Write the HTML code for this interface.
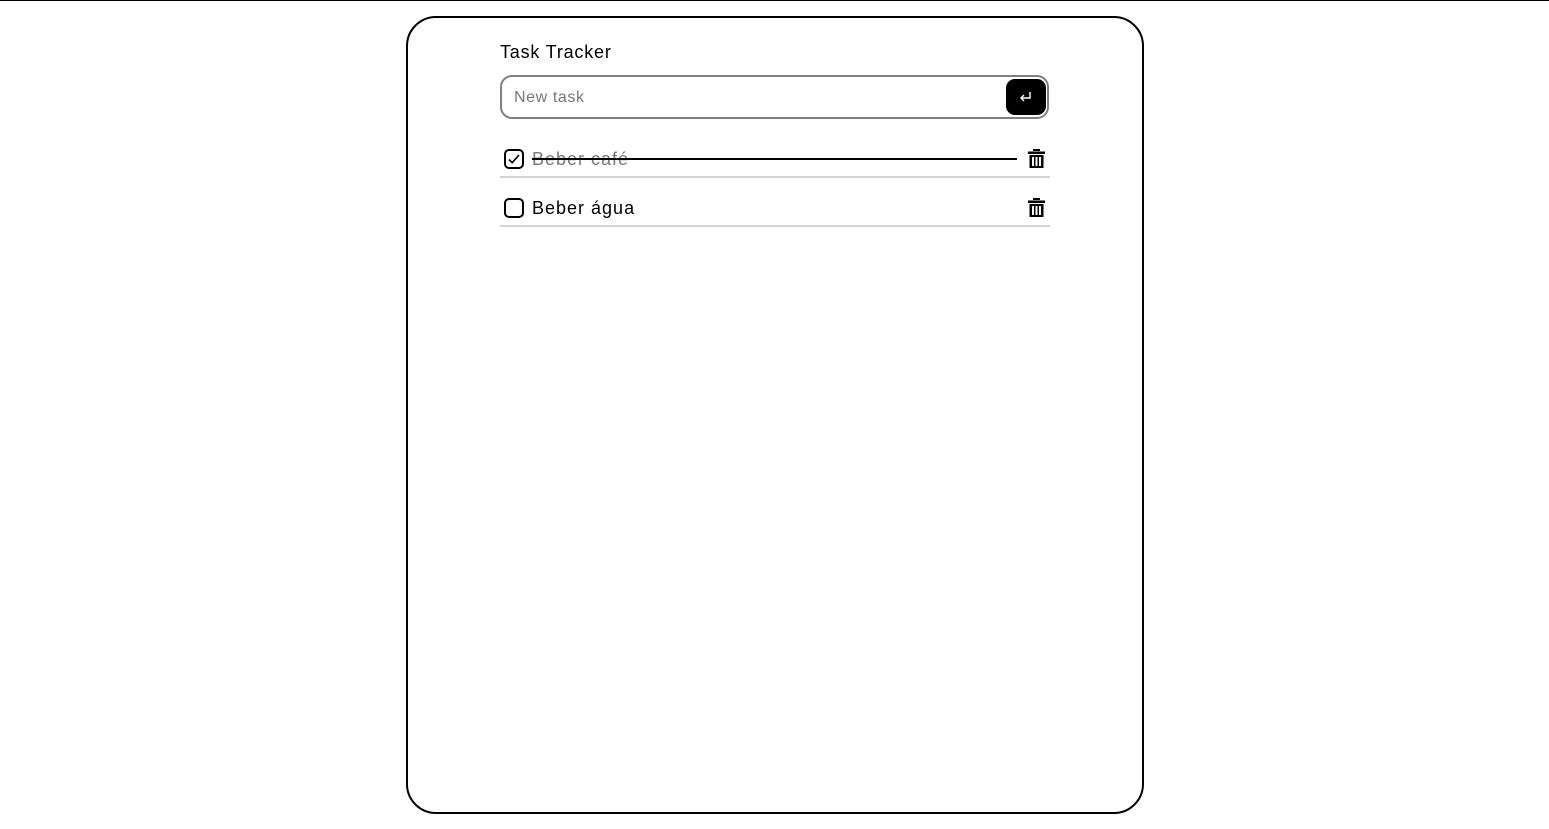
<!DOCTYPE html>
<html><head><meta charset="utf-8">
<style>
html,body{margin:0;padding:0;background:#fff;width:1549px;height:829px;overflow:hidden;font-family:"Liberation Sans",sans-serif;}
.topline{position:absolute;left:0;top:0;width:1549px;height:1px;background:#000;}
.card{position:absolute;left:406px;top:16px;width:734px;height:794px;border:2px solid #000;border-radius:30px;}
.title{position:absolute;left:500px;top:42px;font-size:18px;color:#000;letter-spacing:0.8px;}
.input{position:absolute;left:500px;top:75px;width:545px;height:40px;border:2px solid #808080;border-radius:12px;}
.input span{position:absolute;left:12px;top:12px;font-size:16px;color:#777;letter-spacing:0.6px;}
.btn{position:absolute;left:1006px;top:79px;width:40px;height:36px;background:#000;border-radius:9px;}
.row{position:absolute;left:500px;width:550px;height:2px;background:#d3d3d3;}
.cb{position:absolute;left:504px;width:16px;height:16px;border:2px solid #000;border-radius:5px;}
.txt{position:absolute;left:532px;font-size:18px;letter-spacing:1px;}
.strike{position:absolute;left:532px;top:158px;width:485px;height:2px;background:#000;}
</style></head><body>
<div class="topline"></div>
<div class="card"></div>
<div class="title">Task Tracker</div>
<div class="input"><span>New task</span></div>
<div class="btn"><svg width="40" height="36" viewBox="0 0 40 36"><path d="M24 13v6h-9M18 16l-3 3 3 3" stroke="#fff" stroke-width="1.4" fill="none"/></svg></div>

<div class="cb" style="top:149px"><svg width="16" height="16" viewBox="0 0 16 16" style="position:absolute;left:0;top:0"><path d="M3 8.5l3.2 3.2L13 4" stroke="#000" stroke-width="1.6" fill="none"/></svg></div>
<div class="txt" style="top:149px;color:#777;text-decoration:line-through;">Beber café</div>
<div class="strike"></div>
<svg style="position:absolute;left:1028px;top:149px" width="17" height="20" viewBox="0 0 17 20"><rect x="5" y="0" width="7" height="2" fill="#000"/><rect x="0" y="2.5" width="17" height="2.5" fill="#000"/><path d="M1.5 6h14v13h-14z" fill="#000"/><rect x="4" y="8" width="2" height="9" fill="#fff"/><rect x="7.5" y="8" width="2" height="9" fill="#fff"/><rect x="11" y="8" width="2" height="9" fill="#fff"/></svg>
<div class="row" style="top:176px"></div>

<div class="cb" style="top:198px"></div>
<div class="txt" style="top:198px;color:#000;">Beber água</div>
<svg style="position:absolute;left:1028px;top:198px" width="17" height="20" viewBox="0 0 17 20"><rect x="5" y="0" width="7" height="2" fill="#000"/><rect x="0" y="2.5" width="17" height="2.5" fill="#000"/><path d="M1.5 6h14v13h-14z" fill="#000"/><rect x="4" y="8" width="2" height="9" fill="#fff"/><rect x="7.5" y="8" width="2" height="9" fill="#fff"/><rect x="11" y="8" width="2" height="9" fill="#fff"/></svg>
<div class="row" style="top:225px"></div>
</body></html>
